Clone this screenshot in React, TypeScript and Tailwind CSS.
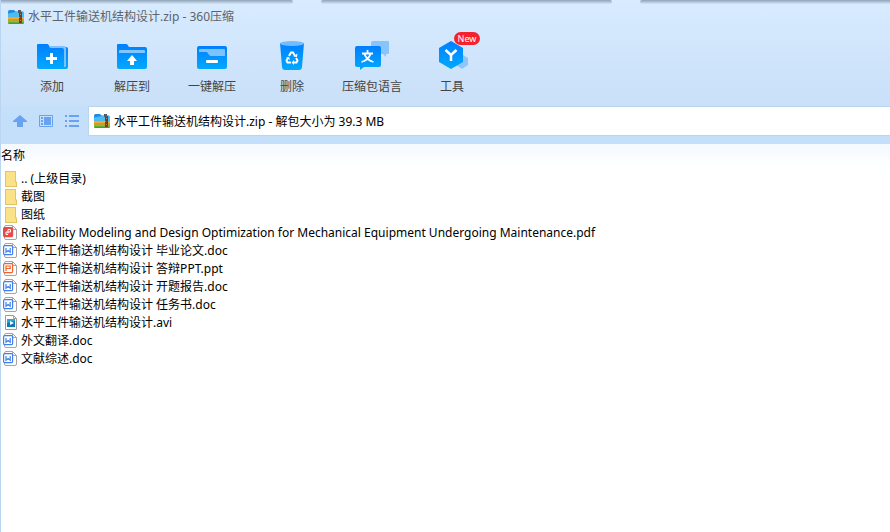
import { useState } from "react";
import type { ReactNode } from "react";

const archiveName = "水平工件输送机结构设计.zip";

type FileKind = "folder" | "pdf" | "doc" | "ppt" | "avi";

const files: { name: string; kind: FileKind }[] = [
  { name: ".. (上级目录)", kind: "folder" },
  { name: "截图", kind: "folder" },
  { name: "图纸", kind: "folder" },
  {
    name: "Reliability Modeling and Design Optimization for Mechanical Equipment Undergoing Maintenance.pdf",
    kind: "pdf",
  },
  { name: "水平工件输送机结构设计 毕业论文.doc", kind: "doc" },
  { name: "水平工件输送机结构设计 答辩PPT.ppt", kind: "ppt" },
  { name: "水平工件输送机结构设计 开题报告.doc", kind: "doc" },
  { name: "水平工件输送机结构设计 任务书.doc", kind: "doc" },
  { name: "水平工件输送机结构设计.avi", kind: "avi" },
  { name: "外文翻译.doc", kind: "doc" },
  { name: "文献综述.doc", kind: "doc" },
];

function ArchiveIcon() {
  return (
    <svg width="16" height="16" viewBox="0 0 16 16" className="shrink-0" aria-hidden="true">
      <path d="M0 2.500 1 1h5l1.500 1.500H15l1 1V9H0z" fill="#1e8fe0" />
      <path d="M0 4.500 8 3h8v5.500H0z" fill="#4dbcf5" />
      <path d="M0 8.500h16V12H0z" fill="#f58a1c" />
      <path d="M0 8.500h16v1H0z" fill="#ffc93c" />
      <path d="M0 11.500h16V14l-1 1H1l-1-1z" fill="#7cc142" />
      <path d="M0 13.500h16v.5l-1 1H1l-1-1z" fill="#4f9a2c" />
      <path d="M11 3h3v11h-3z" fill="#7a3b18" />
      <path d="M10 1h3v3h-3z" fill="#4b5d68" />
      <path d="M12 5h1v1h-1zM11 8h1v1h-1zM12 11h1v1h-1z" fill="#b98258" />
    </svg>
  );
}

function BlueGradient({ id }: { id: string }) {
  return (
    <defs>
      <linearGradient id={id} x1="0" y1="0" x2="0" y2="1">
        <stop offset="0" stopColor="#007fff" />
        <stop offset="1" stopColor="#00a9ff" />
      </linearGradient>
    </defs>
  );
}

function AddIcon() {
  return (
    <svg width="36" height="32" viewBox="0 0 36 32" aria-hidden="true">
      <BlueGradient id="add" />
      <path d="M3 5q0-1 1-1h9q1 0 1.500.8L16 7h16q2 0 2 2v18q0 2-2 2H5q-2 0-2-2z" fill="url(#add)" />
      <path d="M15 6h15q2 0 2 2v18q0 1-1 1h-1V10q0-2-2-2H16z" fill="#7fc0ff" />
      <path d="M16 13h3v4h4v3h-4v4h-3v-4h-4v-3h4z" fill="#fff" />
    </svg>
  );
}

function ExtractIcon() {
  return (
    <svg width="36" height="32" viewBox="0 0 36 32" aria-hidden="true">
      <BlueGradient id="extract" />
      <path d="M3 5q0-1 1-1h8q1 0 1.500.8L15 7h16q2 0 2 2v18q0 2-2 2H5q-2 0-2-2z" fill="url(#extract)" />
      <path d="M5 13v-2q0-1 1-1h24q1 0 1 1v2z" fill="#83c5ff" />
      <path d="m18 15 5 6h-3v4h-4v-4h-3z" fill="#fff" />
    </svg>
  );
}

function OneClickIcon() {
  return (
    <svg width="36" height="32" viewBox="0 0 36 32" aria-hidden="true">
      <BlueGradient id="one-click" />
      <rect x="3" y="6" width="30" height="23" rx="2" fill="url(#one-click)" />
      <path d="M5 10q0-1 1-1h24q1 0 1 1v6H17q-1 0-2-1l-2-3H5z" fill="#7fc0ff" />
      <rect x="12" y="20" width="12" height="3" rx="1" fill="#fff" />
    </svg>
  );
}

function DeleteIcon() {
  return (
    <svg width="36" height="32" viewBox="0 0 36 32" aria-hidden="true">
      <BlueGradient id="delete" />
      <path d="M6 3h24l-2 24q-.3 3-3 3H11q-2.700 0-3-3z" fill="url(#delete)" />
      <ellipse cx="18" cy="3.500" rx="12" ry="2.500" fill="#72bdff" />
      <g fill="none" stroke="#fff" strokeWidth="2">
        <path d="m15 16 2-3.500h2l2 3.500" />
        <path d="m22 18 1.500 2.500-1 2H19" />
        <path d="M17 22.500h-3.500l-1-2L14 18" />
      </g>
      <path d="m19.500 16.500 3.500.5.500-3.500zM20 20l-2.500 2.500L20 25zM12 17.500l3-.5 1 3z" fill="#fff" />
    </svg>
  );
}

function LanguageIcon() {
  return (
    <svg width="36" height="32" viewBox="0 0 36 32" aria-hidden="true">
      <BlueGradient id="language" />
      <path d="M19 1h15q1 0 1 1v11q0 1-1 1h-2v3l-3-3H17V3q0-2 2-2z" fill="#86c4fb" />
      <path d="M3 6h22q2 0 2 2v17q0 2-2 2H10l-4 3v-3H3q-2 0-2-2V8q0-2 2-2z" fill="url(#language)" />
      <g fill="none" stroke="#fff" strokeWidth="1.800">
        <path d="M13.500 10v3.500M8 13.500h11M10.500 14q2 6 9 8M16.500 14q-2 6-9 8" />
      </g>
    </svg>
  );
}

function ToolsIcon() {
  return (
    <svg width="36" height="32" viewBox="0 0 36 32" aria-hidden="true">
      <BlueGradient id="tools" />
      <path d="m29 15 5 3v7l-6 4-6-4z" fill="#8cc6fa" />
      <path d="m17 1 12 7v14l-12 7-12-7V8z" fill="url(#tools)" />
      <path d="m11.500 10 5.500 5 5.500-5M17 15v6" fill="none" stroke="#fff" strokeWidth="2.500" />
    </svg>
  );
}

const tools: { label: string; icon: ReactNode; badge?: string }[] = [
  { label: "添加", icon: <AddIcon /> },
  { label: "解压到", icon: <ExtractIcon /> },
  { label: "一键解压", icon: <OneClickIcon /> },
  { label: "删除", icon: <DeleteIcon /> },
  { label: "压缩包语言", icon: <LanguageIcon /> },
  { label: "工具", icon: <ToolsIcon />, badge: "New" },
];

function FileIcon({ kind }: { kind: FileKind }) {
  if (kind === "folder") {
    return (
      <svg width="16" height="18" viewBox="0 0 16 18" aria-hidden="true">
        <path d="M2 1h11v10l1 1v5H2z" fill="#e3c566" />
        <path d="M3 2h9v10l1 1v3H3z" fill="#fbe188" />
      </svg>
    );
  }
  if (kind === "avi") {
    return (
      <svg width="16" height="18" viewBox="0 0 16 18" aria-hidden="true">
        <path d="M2.500 1.500h8l3 3v11h-11z" fill="#fff" stroke="#9b9b9b" />
        <path d="M10.500 1.500v3h3" fill="none" stroke="#9b9b9b" />
        <path d="M4 5h8v8H4z" fill="#0b7bb8" />
        <path d="M4 5h8v2L4 9z" fill="#2fa6d6" />
        <path d="m7 7 4 2-4 2z" fill="#fff" />
      </svg>
    );
  }
  const color = { pdf: "#e84949", doc: "#3f7fec", ppt: "#f0642c" }[kind];
  return (
    <svg width="16" height="18" viewBox="0 0 16 18" aria-hidden="true">
      <path d="M1.500 3q0-1.500 1.500-1.500h6.500l4 4V14q0 1.500-1.500 1.500H3q-1.500 0-1.500-1.500z" fill="#fff" stroke="#a5a5a5" />
      <path d="M9.500 1.500V4q0 1.500 1.500 1.500h2.500" fill="none" stroke="#a5a5a5" />
      <rect x=".6" y="3.600" width="9" height="9" rx="1.200" fill={kind === "pdf" ? color : "#fff"} stroke={color} strokeWidth="1.200" />
      {kind === "pdf" && <path d="M5 9.500v-4h2.500v2.500H3v2.500h2" fill="none" stroke="#fff" />}
      {kind === "doc" && <path d="M3 6v4.200l2.100-1.700 2.100 1.700V6" fill="none" stroke={color} strokeWidth="1.200" />}
      {kind === "ppt" && <path d="M3 11V6h4.200v2.500H3" fill="none" stroke={color} strokeWidth="1.200" />}
    </svg>
  );
}

function TopEdge() {
  return (
    <div className="flex h-1 gap-7">
      <div className="flex-1 rounded-r-sm bg-linear-to-b from-[#8fa4b8] to-[#d4e6f9]" />
      <div className="flex-1 rounded-sm bg-linear-to-b from-[#8fa4b8] to-[#d4e6f9]" />
      <div className="w-[250px] rounded-l-sm bg-linear-to-b from-[#8fa4b8] to-[#d4e6f9]" />
    </div>
  );
}

function TitleBar() {
  return (
    <div className="flex items-center gap-1 px-[7px] pt-[5px] pb-[7px]">
      <ArchiveIcon />
      <h1 className="text-xs text-[#5d6369]">{archiveName} - 360压缩</h1>
    </div>
  );
}

function Toolbar() {
  return (
    <div className="flex px-[11px] pt-2 pb-[11px]">
      {tools.map((tool) => (
        <button key={tool.label} type="button" className="flex w-20 flex-col items-center text-xs text-[#444]">
          <span className="relative mb-[7px]">
            {tool.icon}
            {tool.badge && (
              <span className="absolute -top-2 left-5 h-[13px] w-[26px] rounded-full bg-[#f5222d] text-center text-[9px] leading-[13px] text-white">
                {tool.badge}
              </span>
            )}
          </span>
          {tool.label}
        </button>
      ))}
    </div>
  );
}

function AddressBar() {
  const [path, setPath] = useState(`${archiveName} - 解包大小为 39.3 MB`);

  return (
    <div className="flex items-center bg-[#c4dff9] pb-2 pl-[11px]">
      <div className="flex w-19 shrink-0 gap-2.5 text-[#68a2f0]">
        <button type="button" aria-label="上级目录">
          <svg width="16" height="16" viewBox="0 0 16 16">
            <path d="m8 2 7 6v1h-4v5H5V9H1V8z" fill="currentColor" />
          </svg>
        </button>
        <button type="button" aria-label="预览">
          <svg width="16" height="16" viewBox="0 0 16 16">
            <path d="M1.500 2.500h13v11h-13z" fill="none" stroke="currentColor" />
            <path d="M3 4h2v2H3zm0 3h2v2H3zm0 3h2v2H3zM6 4h7v8H6z" fill="currentColor" />
          </svg>
        </button>
        <button type="button" aria-label="列表">
          <svg width="16" height="16" viewBox="0 0 16 16">
            <path d="M1 2h2v2H1zm4 0h10v2H5zM1 7h2v2H1zm4 0h10v2H5zM1 12h2v2H1zm4 0h10v2H5z" fill="currentColor" />
          </svg>
        </button>
      </div>
      <label className="flex h-7.5 min-w-0 flex-1 items-center gap-1 border border-r-0 border-[#b9d5ef] bg-white pl-[5px]">
        <ArchiveIcon />
        <input
          aria-label="路径"
          value={path}
          onChange={(e) => setPath(e.target.value)}
          className="min-w-0 flex-1 pt-0.5 text-xs text-black outline-none"
        />
      </label>
    </div>
  );
}

function FileTable() {
  return (
    <table className="w-full border-collapse text-left text-xs text-black">
      <thead>
        <tr className="h-6 bg-linear-to-b from-[#f3f9ff] to-white">
          <th className="p-0 font-normal">名称</th>
        </tr>
      </thead>
      <tbody className="before:block before:h-0.5">
        {files.map((file) => (
          <tr key={file.name}>
            <td className="p-0">
              <div className="flex h-4.5 items-center gap-0.5 pl-0.5 whitespace-nowrap">
                <FileIcon kind={file.kind} />
                {file.name}
              </div>
            </td>
          </tr>
        ))}
      </tbody>
    </table>
  );
}

export default function App() {
  return (
    <main className="min-h-screen border-l border-[#b9d5ef] bg-white font-['Noto_Sans','Noto_Sans_CJK_SC',sans-serif]">
      <header className="bg-linear-to-b from-[#d8ebff] to-[#c4dcf6]">
        <TopEdge />
        <TitleBar />
        <Toolbar />
        <AddressBar />
      </header>
      <FileTable />
    </main>
  );
}
